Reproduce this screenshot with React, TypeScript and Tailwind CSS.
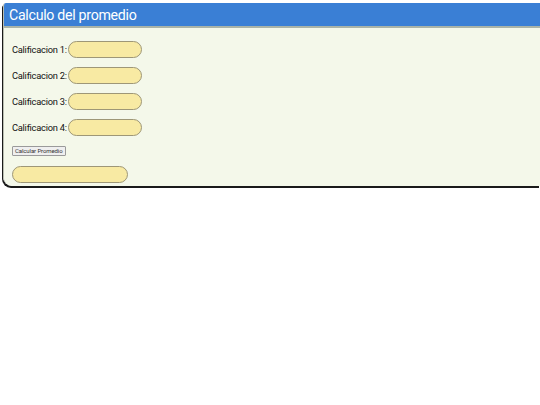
import React from "react";

const font = { fontFamily: "Roboto, 'Liberation Sans', sans-serif" };

function Row({ n }: { n: number }) {
  return (
    <div className="flex items-center h-[17px]">
      <span className="text-[9.3px] tracking-[-0.25px] text-[#111] leading-none">Calificacion {n}:</span>
      <div className="ml-[1px] w-[74px] h-[17px] rounded-full bg-[#f8eaa3] border border-[#9e9777]" />
    </div>
  );
}

export default function App() {
  return (
    <div className="w-[540px] h-[405px] bg-white pt-[3px] pl-[3px]" style={font}>
      <div className="rounded-tl-[3px] rounded-bl-[9px] overflow-hidden border-l border-[#b9bdb0] shadow-[-1px_2px_0_#1a1a1a]">
        <div className="h-[25px] bg-[#3a7fd5] text-white text-[14.2px] tracking-[-0.3px] leading-[25px] pl-[5px] border-b-2 border-[#a9b3a8]">
          Calculo del promedio
        </div>
        <div className="bg-[#f4f8ea] pl-[8px] pt-[13px] pb-[3px] flex flex-col">
          <div className="flex flex-col gap-[9px]">
            <Row n={1} />
            <Row n={2} />
            <Row n={3} />
            <Row n={4} />
          </div>
          <div className="mt-[10px] flex">
            <button className="h-[10px] px-[2px] text-[6px] tracking-[-0.1px] leading-none text-[#333] bg-[#efefef] border border-[#9a9a9a] rounded-[1px]">
              Calcular Promedio
            </button>
          </div>
          <div className="mt-[10px] w-[116px] h-[17px] rounded-full bg-[#f8eaa3] border border-[#9e9777]" />
        </div>
      </div>
    </div>
  );
}
